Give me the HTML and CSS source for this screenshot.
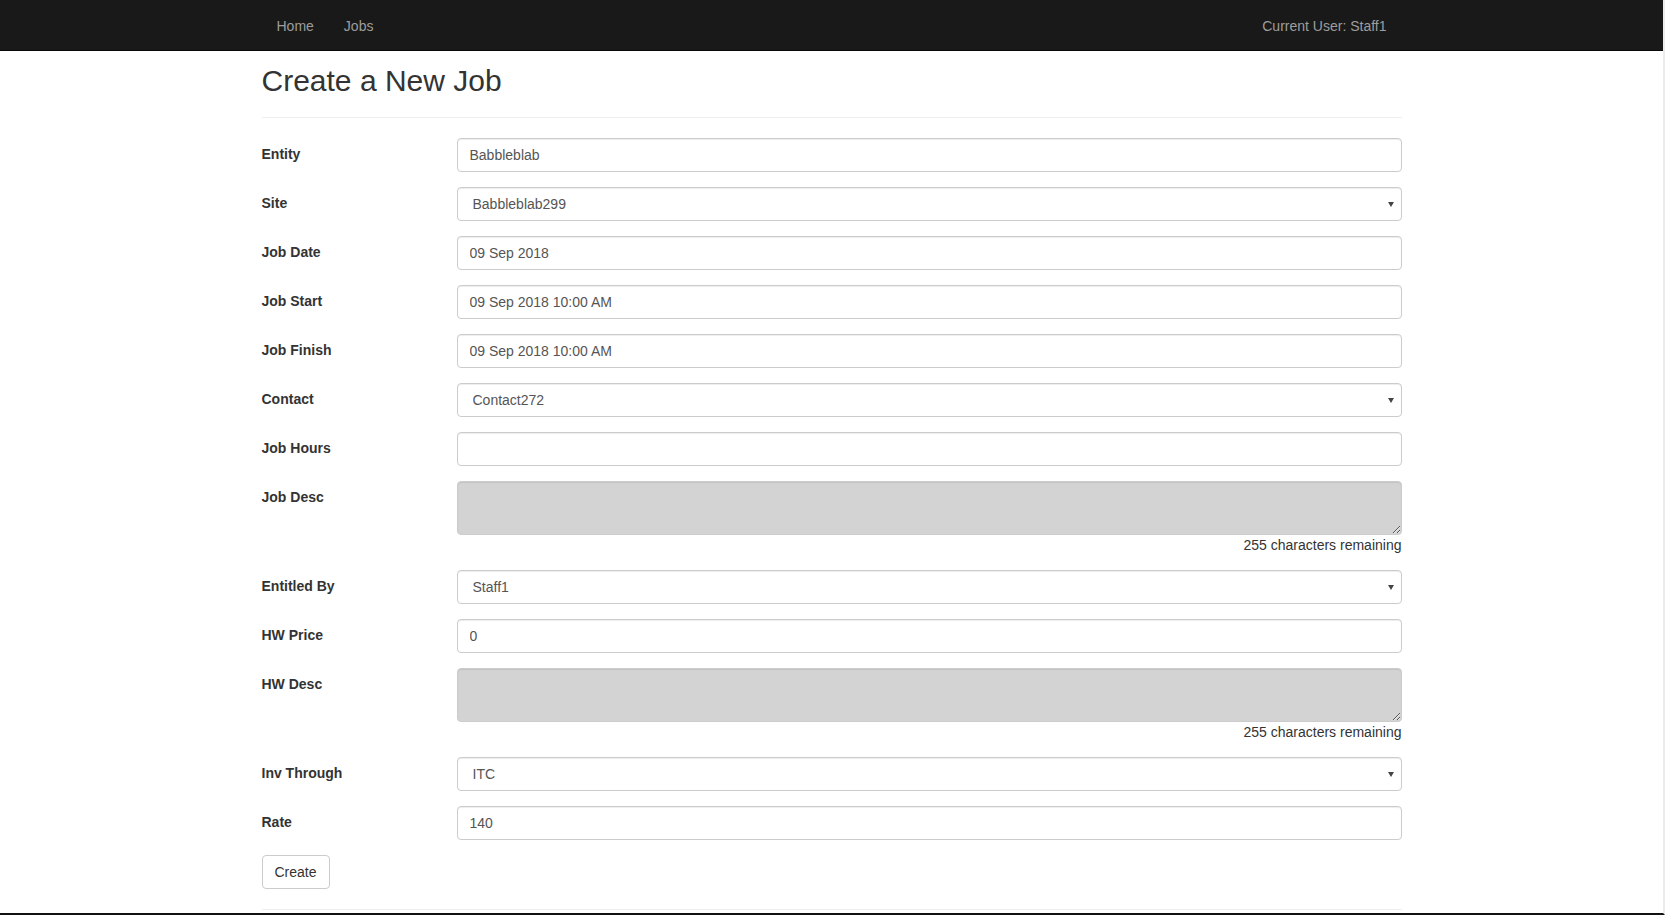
FILE: index.html
```html
<!DOCTYPE html>
<html lang="en">
<head>
<meta charset="utf-8">
<title>Create a New Job</title>
<link rel="stylesheet" href="styles.css">
</head>
<body>
<div class="frame">
  <nav class="navbar">
    <div class="container nav-inner">
      <ul class="nav-links">
        <li><a href="#">Home</a></li>
        <li><a href="#">Jobs</a></li>
      </ul>
      <p class="nav-text">Current User: Staff1</p>
    </div>
  </nav>
  <main class="container">
    <h2 class="title">Create a New Job</h2>
    <hr class="rule">
    <form class="form">
      <div class="group"><label class="lbl">Entity</label><div class="ctl"><input class="input" type="text" value="Babbleblab"></div></div>
      <div class="group"><label class="lbl">Site</label><div class="ctl"><div class="sel"><select class="input select"><option>Babbleblab299</option></select></div></div></div>
      <div class="group"><label class="lbl">Job Date</label><div class="ctl"><input class="input" type="text" value="09 Sep 2018"></div></div>
      <div class="group"><label class="lbl">Job Start</label><div class="ctl"><input class="input" type="text" value="09 Sep 2018 10:00 AM"></div></div>
      <div class="group"><label class="lbl">Job Finish</label><div class="ctl"><input class="input" type="text" value="09 Sep 2018 10:00 AM"></div></div>
      <div class="group"><label class="lbl">Contact</label><div class="ctl"><div class="sel"><select class="input select"><option>Contact272</option></select></div></div></div>
      <div class="group"><label class="lbl">Job Hours</label><div class="ctl"><input class="input" type="text" value=""></div></div>
      <div class="group"><label class="lbl">Job Desc</label><div class="ctl"><textarea class="input area" rows="2"></textarea><div class="remain">255 characters remaining</div></div></div>
      <div class="group"><label class="lbl">Entitled By</label><div class="ctl"><div class="sel"><select class="input select"><option>Staff1</option></select></div></div></div>
      <div class="group"><label class="lbl">HW Price</label><div class="ctl"><input class="input" type="text" value="0"></div></div>
      <div class="group"><label class="lbl">HW Desc</label><div class="ctl"><textarea class="input area" rows="2"></textarea><div class="remain">255 characters remaining</div></div></div>
      <div class="group"><label class="lbl">Inv Through</label><div class="ctl"><div class="sel"><select class="input select"><option>ITC</option></select></div></div></div>
      <div class="group"><label class="lbl">Rate</label><div class="ctl"><input class="input" type="text" value="140"></div></div>
      <div class="actions"><button class="btn" type="button">Create</button></div>
    </form>
    <hr class="rule bottom-rule">
  </main>
</div>
</body>
</html>
```

FILE: styles.css
```css
* { box-sizing: border-box; }
html, body { margin: 0; padding: 0; }
body {
  font-family: "Liberation Sans", Arial, sans-serif;
  font-size: 14px;
  line-height: 20px;
  color: #333;
  background: #fff;
}
.frame {
  height: 915px;
  overflow: hidden;
  border-right: 2px solid #ececec;
  border-bottom: 2px solid #111;
}
.container {
  width: 1170px;
  margin: 0 auto;
  padding: 0 15px;
}
.navbar {
  height: 51px;
  background: #191919;
  border-bottom: 1px solid #080808;
}
.nav-inner {
  display: flex;
  justify-content: space-between;
  align-items: flex-start;
}
.nav-links {
  list-style: none;
  margin: 0;
  padding: 0;
  display: flex;
}
.nav-links a {
  display: block;
  padding: 16px 15px 14px;
  color: #9d9d9d;
  text-decoration: none;
}
.nav-text {
  margin: 16px 15px 0 0;
  color: #9d9d9d;
}
.title {
  margin: 13px 0 0 0;
  font-size: 30px;
  line-height: 33px;
  font-weight: 500;
  color: #333;
}
.rule {
  border: 0;
  border-top: 1px solid #eee;
  margin: 20px 0;
}
.group {
  display: flex;
  margin-bottom: 15px;
}
.lbl {
  width: 195px;
  flex: none;
  padding-top: 6px;
  font-weight: bold;
  color: #333;
}
.ctl {
  flex: 1;
}
.input {
  display: block;
  width: 100%;
  height: 34px;
  padding: 6px 12px;
  font-family: inherit;
  font-size: 14px;
  line-height: 20px;
  color: #555;
  background: #fff;
  border: 1px solid #ccc;
  border-radius: 4px;
  box-shadow: inset 0 1px 1px rgba(0,0,0,.075);
  outline: none;
}
.sel { position: relative; }
.select {
  -webkit-appearance: none;
  appearance: none;
  padding-left: 15px;
}
.sel::after {
  content: "";
  position: absolute;
  right: 8px;
  top: 15px;
  border-left: 3px solid transparent;
  border-right: 3px solid transparent;
  border-top: 5px solid #444;
  pointer-events: none;
}
.area {
  height: 54px;
  background: #d3d3d3;
  resize: vertical;
}
.remain {
  text-align: right;
  color: #333;
}
.btn {
  height: 34px;
  padding: 6px 12px;
  font-family: inherit;
  font-size: 14px;
  line-height: 20px;
  color: #333;
  background: #fff;
  border: 1px solid #ccc;
  border-radius: 4px;
}
.bottom-rule {
  margin-top: 20px;
}
```
